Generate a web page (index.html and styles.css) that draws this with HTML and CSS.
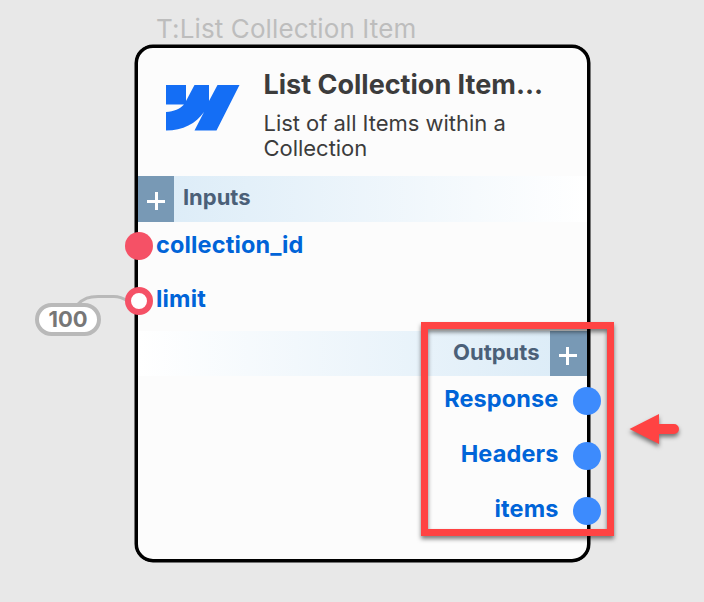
FILE: index.html
```html
<!DOCTYPE html>
<html lang="en">
<head>
<meta charset="utf-8">
<title>List Collection Item</title>
<link rel="stylesheet" href="styles.css">
</head>
<body>
<main class="canvas">
  <svg class="wire" width="60" height="20" viewBox="0 0 60 20"><path d="M5 15C12 8 17 6.500 26 6.500H42C48 6.500 51 8 56 11" fill="none" stroke="#b9b9b9" stroke-width="3"/></svg>
  <div class="constant">100</div>
  <div class="node-label"><span>T:List Collection Item</span></div>
  <section class="node">
    <header class="head">
      <svg class="logo" width="74" height="46" viewBox="0 0 74 46"><path fill="#146ef5" d="M0 0H20V16L28.500 0H43V16L51.500 0H73.500L50.500 45.500H28.500L38 27C30 38.500 17 45.500 0 45.500V27C8 26.500 14 24 18 19.500H0Z"/></svg>
      <div class="titles">
        <h1><span>List Collection Item…</span></h1>
        <p><span>List of all Items within a</span><br><span>Collection</span></p>
      </div>
    </header>
    <div class="bar inputs"><i class="add"></i><span>Inputs</span></div>
    <ul class="ports in">
      <li><i class="dot red"></i><span>collection_id</span></li>
      <li><i class="dot ring"></i><span>limit</span></li>
    </ul>
    <div class="bar outputs"><span>Outputs</span><i class="add"></i></div>
    <ul class="ports out">
      <li><span>Response</span><i class="dot blue"></i></li>
      <li><span>Headers</span><i class="dot blue"></i></li>
      <li><span>items</span><i class="dot blue"></i></li>
    </ul>
  </section>
  <div class="highlight"></div>
  <svg class="arrow" width="70" height="50" viewBox="0 0 70 50"><path fill="#ff4343" d="M8.500 19L38 4V14H53A5 5 0 0 1 53 24H38V34Z"/></svg>
</main>
</body>
</html>
```
FILE: styles.css
```css
* { box-sizing: border-box; }
body { margin: 0; font-family: Inter, "Liberation Sans", sans-serif; }
h1, p, ul { margin: 0; padding: 0; }
ul { list-style: none; }
.canvas { position: relative; width: 704px; height: 602px; overflow: hidden; background: #e8e8e8; }
.node-label { position: absolute; left: 156px; top: 13px; font-size: 26px; line-height: 32px; letter-spacing: .12px; color: #bdbdbd; white-space: nowrap; }
.node { position: absolute; left: 135px; top: 45px; width: 454.5px; height: 517px; border: 3px solid #000; border-radius: 18px; background: #fcfcfc; box-shadow: 0 0 0 .5px #000; }
.head { display: flex; height: 128px; padding: 20px 0 0 28px; }
.logo { flex: none; margin-top: 17px; }
.titles { margin-left: 23.500px; white-space: nowrap; color: #3c3c3c; }
h1 { font-size: 27px; line-height: 33px; font-weight: 700; }
p { margin-top: 10px; font-size: 22px; line-height: 25px; letter-spacing: -.03px; }
.bar { display: flex; align-items: center; height: 46px; font-size: 22px; font-weight: 700; color: #4b6078; }
.bar span { padding-bottom: 3px; }
.inputs { background: linear-gradient(90deg, #daebf7, #fff); gap: 8.500px; }
.inputs span { padding-bottom: 5px; }
.outputs { height: 45px; background: linear-gradient(270deg, #daebf7, #fff); justify-content: flex-end; gap: 10px; }
.add { align-self: stretch; width: 36.400px; background: linear-gradient(#fff, #fff) 9px 24px / 18px 3px no-repeat, linear-gradient(#fff, #fff) 16.500px 16px / 3px 18px no-repeat, #7899b5; }
.outputs .add { width: 37px; background-position: 9px 23px, 16px 15.500px, 0 0; }
.ports { font-size: 23.500px; font-weight: 700; color: #0064d8; }
.ports li { display: flex; align-items: center; height: 55px; position: relative; }
.in { height: 109px; }
.in li { margin-left: -13px; gap: 3px; top: -4px; }
.in span { letter-spacing: .15px; padding-bottom: 2px; }
.in li + li span { padding-bottom: 4px; }
.out li { justify-content: flex-end; margin-right: -14px; gap: 14px; top: -3px; }
.out span { padding-bottom: 5px; letter-spacing: .12px; }
.dot { flex: none; width: 28px; height: 28px; border-radius: 50%; }
.red { background: #f55166; }
.ring { background: #fff; border: 6px solid #f55166; }
.blue { background: #3d8bfd; }
.constant { position: absolute; left: 35px; top: 303px; width: 66px; height: 33px; border: 4px solid #b9b9b9; border-radius: 17px; background: #fff; color: #777; font-size: 22px; line-height: 25px; font-weight: 700; text-align: center; }
.wire { position: absolute; left: 72px; top: 290px; }
.highlight { position: absolute; left: 421px; top: 322px; width: 193px; height: 214px; border: 7px solid #ff4343; filter: drop-shadow(0 3px 2px rgba(0,0,0,.5)); }
.arrow { position: absolute; left: 621px; top: 410px; filter: drop-shadow(0 3px 2px rgba(0,0,0,.5)); }
```
